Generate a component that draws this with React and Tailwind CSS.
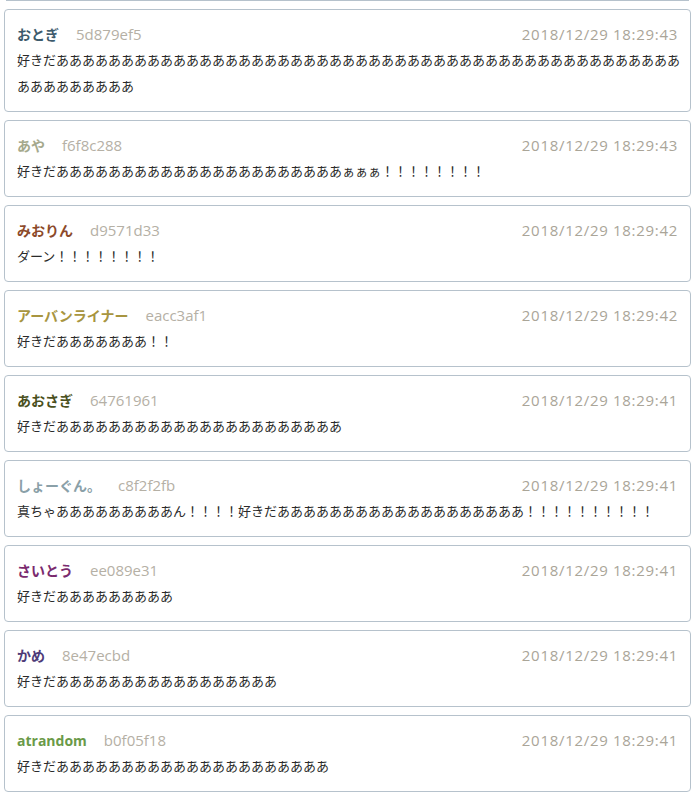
const comments = [
  { name: 'おとぎ', color: 'text-[#3d5a6c]', id: '5d879ef5', time: '2018/12/29 18:29:43', text: '好きだ' + 'あ'.repeat(57) },
  { name: 'あや', color: 'text-[#a5a98c]', id: 'f6f8c288', time: '2018/12/29 18:29:43', text: '好きだ' + 'あ'.repeat(22) + 'ぁぁぁ' + '！'.repeat(8) },
  { name: 'みおりん', color: 'text-[#8c4a2a]', id: 'd9571d33', time: '2018/12/29 18:29:42', text: 'ダーン' + '！'.repeat(8) },
  { name: 'アーバンライナー', color: 'text-[#a89540]', id: 'eacc3af1', time: '2018/12/29 18:29:42', text: '好きだ' + 'あ'.repeat(7) + '！！' },
  { name: 'あおさぎ', color: 'text-[#4a5020]', id: '64761961', time: '2018/12/29 18:29:41', text: '好きだ' + 'あ'.repeat(22) },
  { name: 'しょーぐん。', color: 'text-[#8aa0a8]', id: 'c8f2f2fb', time: '2018/12/29 18:29:41', text: '真ちゃ' + 'あ'.repeat(9) + 'ん！！！！好きだ' + 'あ'.repeat(19) + '！'.repeat(10) },
  { name: 'さいとう', color: 'text-[#7a2a6e]', id: 'ee089e31', time: '2018/12/29 18:29:41', text: '好きだ' + 'あ'.repeat(9) },
  { name: 'かめ', color: 'text-[#4e3a78]', id: '8e47ecbd', time: '2018/12/29 18:29:41', text: '好きだ' + 'あ'.repeat(17) },
  { name: 'atrandom', color: 'text-[#6a9a48]', id: 'b0f05f18', time: '2018/12/29 18:29:41', text: '好きだ' + 'あ'.repeat(21) },
];

function Comment({ c }) {
  return (
    <div className="border border-[#b6c2cc] rounded bg-white pl-3 pr-2 pt-[11px] pb-3">
      <div className="flex items-center h-[26px]">
        <span className={`text-[14px] font-bold ${c.color}`}>{c.name}</span>
        <span className="ml-[17px] text-[15px] text-[#b5b0a5]">{c.id}</span>
        <span className="ml-auto mr-1 text-[15px] tracking-[0.7px] text-[#aaa598]">{c.time}</span>
      </div>
      <p className="text-[13px] leading-[26px] text-[#2a2a2a] break-all">{c.text}</p>
    </div>
  );
}

export default function App() {
  return (
    <div className="w-[695px] h-[800px] overflow-hidden bg-white px-1" style={{ fontFamily: '"Open Sans", "Noto Sans CJK JP", sans-serif' }}>
      {/* tail of the previous comment, scrolled off the top */}
      <div className="h-px bg-[#b6c2cc] mx-0.5" />
      <div className="flex flex-col gap-2 mt-2">
        {comments.map((c) => (
          <Comment key={c.id} c={c} />
        ))}
      </div>
    </div>
  );
}
